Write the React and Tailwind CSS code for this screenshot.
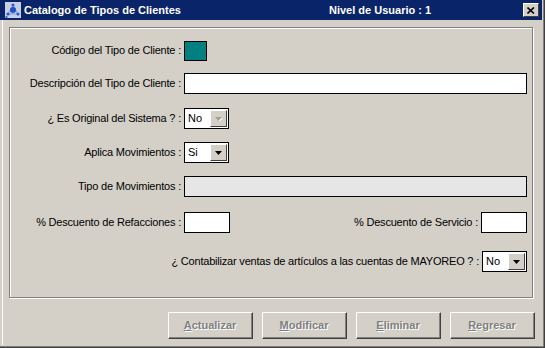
import React from "react";

const font = { fontFamily: '"Liberation Sans", Arial, sans-serif' };

function Field({ className = "", disabled = false }) {
  return (
    <div
      className={`h-[21px] border border-black ${disabled ? "bg-[#e6e6e6]" : "bg-white"} ${className}`}
    />
  );
}

function Select({ value, disabled = false }) {
  return (
    <div className="relative w-[45px] h-[21px] border border-black bg-white flex items-center">
      <span className="pl-[3px] text-[11px] text-black">{value}</span>
      {/* classic drop-down arrow button */}
      <div className="absolute right-[1px] top-[1px] w-[17px] h-[17px] bg-[#d4d0c8] border border-t-white border-l-white border-r-[#404040] border-b-[#404040] flex items-center justify-center">
        <svg width="7" height="4" viewBox="0 0 7 4">
          {disabled && <path d="M1 1h7L4.5 4.5z" fill="#fff" />}
          <path d="M0 0h7L3.5 4z" fill={disabled ? "#a0a0a0" : "#000"} />
        </svg>
      </div>
    </div>
  );
}

function Label({ children }) {
  return (
    <div className="w-[174px] pr-[3px] text-right text-[11px] tracking-[-0.2px] text-black whitespace-nowrap">
      {children}
    </div>
  );
}

function Btn({ letter, rest }) {
  return (
    <div className="w-[85px] h-[27px] bg-[#d4d0c8] border border-t-white border-l-white border-r-[#404040] border-b-[#404040]">
      <div className="w-full h-full border-r border-b border-[#808080] flex items-center justify-center">
        <span className="text-[11px] font-bold text-[#808080] [text-shadow:1px_1px_0_#fff]">
          <span className="underline">{letter}</span>
          {rest}
        </span>
      </div>
    </div>
  );
}

function TitleIcon() {
  return (
    <svg width="16" height="16" viewBox="0 0 16 16">
      <rect x="0" y="0" width="16" height="16" fill="#c8d0e0" />
      <path d="M8 3L3 12M8 3l5 9M3 12h10" stroke="#7f9bd0" strokeWidth="1" />
      <circle cx="8" cy="8" r="3" fill="#1f4fc8" />
      <circle cx="8" cy="3" r="1.6" fill="#2a5ad8" />
      <circle cx="3" cy="12" r="1.6" fill="#2a5ad8" />
      <circle cx="13" cy="12" r="1.6" fill="#2a5ad8" />
      <circle cx="1.5" cy="15" r="1" fill="#1f4fc8" />
    </svg>
  );
}

export default function App() {
  return (
    <div style={font} className="w-[545px] h-[348px] bg-[#404040] pr-px pb-px">
      <div className="h-full bg-[#808080] pr-px pb-px">
        <div className="h-full bg-[#d4d0c8] pr-px pb-px flex flex-col">
          {/* title bar */}
          <div className="h-[20px] bg-[#0a246a] flex items-center pl-[5px] pr-[3px] text-white text-[11px] font-bold">
            <TitleIcon />
            <span className="ml-[3px] w-[305px]">Catalogo de Tipos de Clientes</span>
            <span className="flex-1">Nivel de Usuario : 1</span>
            <div className="w-[16px] h-[14px] bg-[#d4d0c8] border border-t-white border-l-white border-r-[#404040] border-b-[#404040] flex items-center justify-center">
              <svg width="8" height="7" viewBox="0 0 8 7">
                <path d="M0.5 0.5L7 6.5M7 0.5L0.5 6.5" stroke="#000" strokeWidth="1.6" />
              </svg>
            </div>
          </div>

          <div className="flex-1 ml-[2px] border-l border-white flex flex-col">
            {/* group box */}
            <div className="ml-[6px] mt-[7px] w-[524px] h-[271px] border border-[#808080] shadow-[1px_1px_0_#fff,inset_1px_1px_0_#fff] pt-[12px] pr-[5px]">
              <div className="flex items-center h-[21px]">
                <Label>Código del Tipo de Cliente :</Label>
                <div className="w-[23px] h-[20px] bg-[#008080] border border-black" />
              </div>
              <div className="flex items-center h-[21px] mt-[12px]">
                <Label>Descripción del Tipo de Cliente :</Label>
                <Field className="flex-1" />
              </div>
              <div className="flex items-center h-[21px] mt-[14px]">
                <Label>¿ Es Original del Sistema ? :</Label>
                <Select value="No" disabled />
              </div>
              <div className="flex items-center h-[21px] mt-[13px]">
                <Label>Aplica Movimientos :</Label>
                <Select value="Si" />
              </div>
              <div className="flex items-center h-[21px] mt-[13px]">
                <Label>Tipo de Movimientos :</Label>
                <Field className="flex-1" disabled />
              </div>
              <div className="flex items-center h-[21px] mt-[15px]">
                <Label>% Descuento de Refacciones :</Label>
                <Field className="w-[46px]" />
                <div className="flex-1 pr-[3px] text-right text-[11px] tracking-[-0.2px] text-black">
                  % Descuento de Servicio :
                </div>
                <Field className="w-[46px]" />
              </div>
              <div className="flex items-center justify-end h-[21px] mt-[18px]">
                <div className="pr-[3px] text-[11px] tracking-[-0.2px] text-black">
                  ¿ Contabilizar ventas de artículos a las cuentas de MAYOREO ? :
                </div>
                <Select value="No" />
              </div>
            </div>

            {/* buttons */}
            <div className="mt-[14px] ml-[165px] flex gap-[9px]">
              <Btn letter="A" rest="ctualizar" />
              <Btn letter="M" rest="odificar" />
              <Btn letter="E" rest="liminar" />
              <Btn letter="R" rest="egresar" />
            </div>
          </div>
        </div>
      </div>
    </div>
  );
}
